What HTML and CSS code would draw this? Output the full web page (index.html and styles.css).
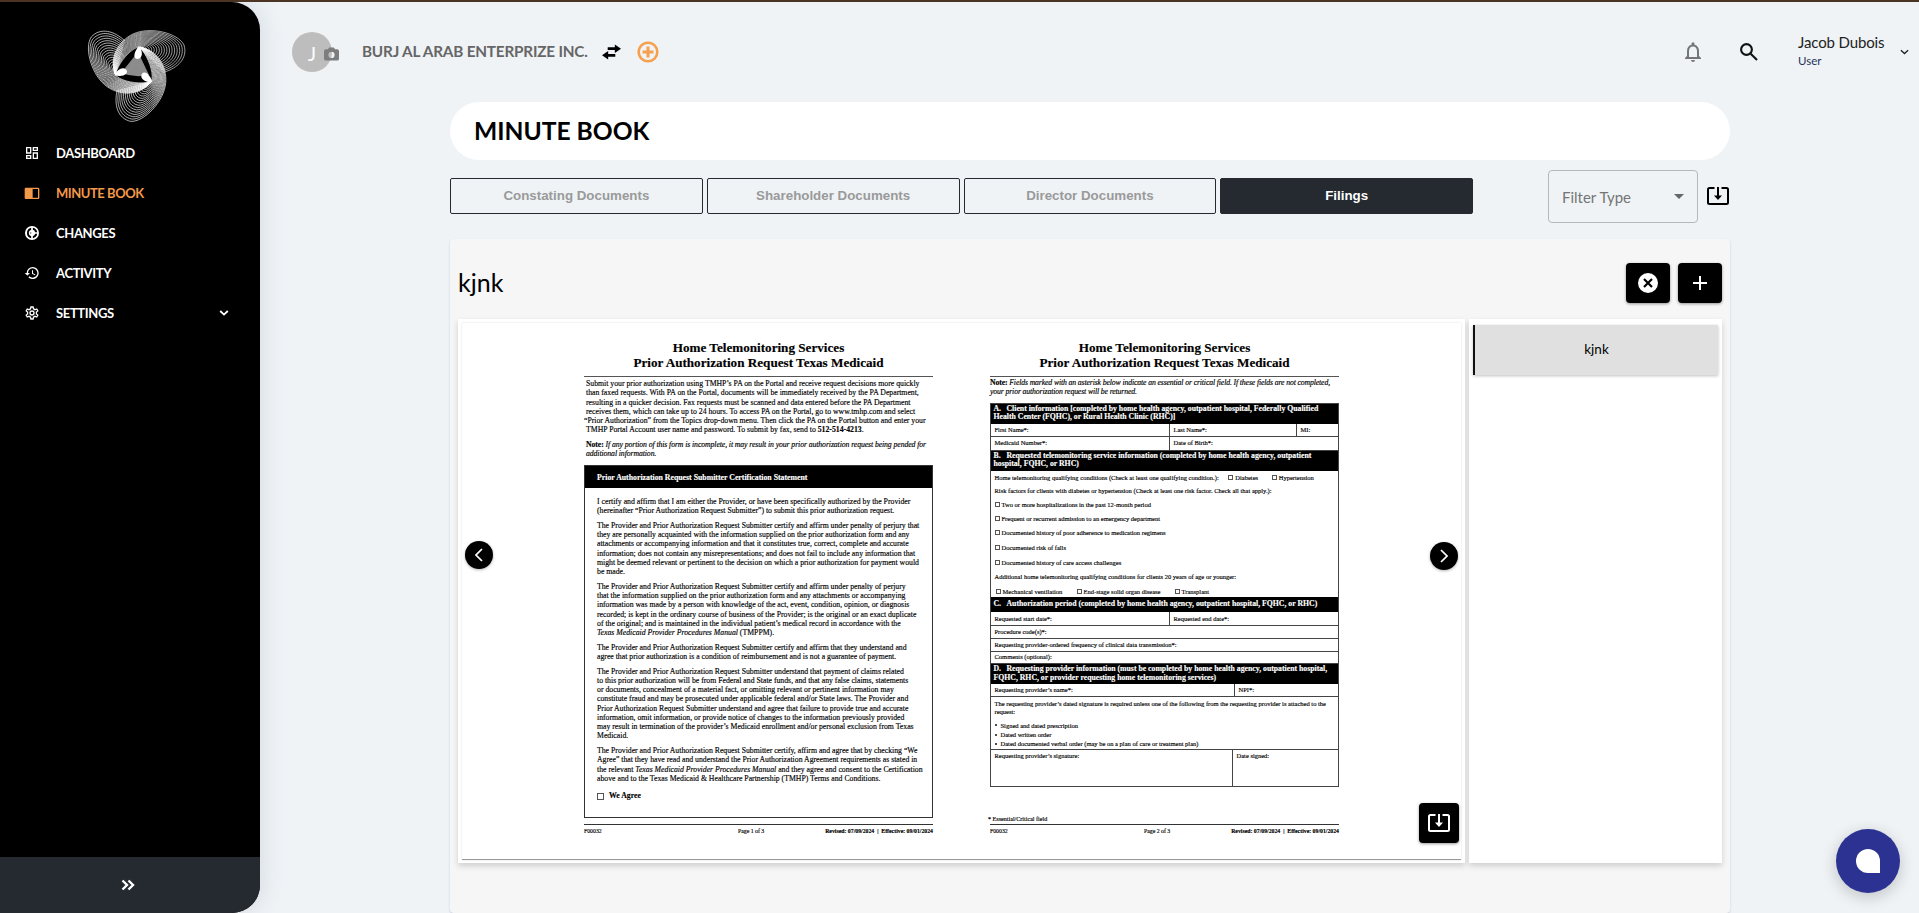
FILE: index.html
```html
<!DOCTYPE html>
<html lang="en">
<head>
<meta charset="utf-8">
<title>Minute Book</title>
<link rel="stylesheet" href="styles.css">
</head>
<body>
<div class="app">
  <aside class="sidebar">
    <svg class="logo" viewBox="86 28 100 96" id="logo" aria-label="Logo"></svg>
    <nav class="nav">
      <a class="nav-item"><svg class="nav-icon" viewBox="0 0 24 24"><path d="M19 5v2h-4V5h4M9 5v6H5V5h4m10 8v6h-4v-6h4M9 17v2H5v-2h4M21 3h-8v6h8V3zM11 3H3v10h8V3zm10 8h-8v10h8V11zm-10 4H3v6h8v-6z"/></svg><span>DASHBOARD</span></a>
      <a class="nav-item active"><svg class="nav-icon" viewBox="0 0 24 24"><path d="M21 4H3c-1.100 0-2 .9-2 2v13c0 1.100.9 2 2 2h18c1.100 0 2-.9 2-2V6c0-1.100-.9-2-2-2zM3 19V6h8v13H3zm18 0h-8V6h8v13z"/><path d="M3 5h9v15H3z"/></svg><span>MINUTE BOOK</span></a>
      <a class="nav-item"><svg class="nav-icon" viewBox="0 0 24 24"><path fill-rule="evenodd" d="M12 1.500a10.500 10.500 0 1 0 0 21 10.500 10.500 0 0 0 0-21zM13.300 4.200A8 8 0 0 1 19.800 10.700h-3A5 5 0 0 0 13.300 7.200zM10.700 4.200v3a5 5 0 0 0 0 9.600v3a8 8 0 0 1 0-15.600zM13.300 19.800v-3a5 5 0 0 0 3.500-3.500h3a8 8 0 0 1-6.500 6.500zM10.700 10v4a2.500 2.500 0 0 1 0-4z"/></svg><span>CHANGES</span></a>
      <a class="nav-item"><svg class="nav-icon" viewBox="0 0 24 24"><path d="M13 3a9 9 0 0 0-9 9H1l3.890 3.890.07.14L9 12H6a7 7 0 1 1 2.060 4.940l-1.420 1.420A9 9 0 1 0 13 3zm-1 5v5l4.280 2.540.72-1.210-3.500-2.080V8H12z"/></svg><span>ACTIVITY</span></a>
      <a class="nav-item"><svg class="nav-icon" viewBox="0 0 24 24"><path fill-rule="evenodd" d="M9.500 2h5l.5 3 1.600.9 2.900-1.100 2.500 4.300-2.400 1.900v2l2.400 1.900-2.500 4.300-2.900-1.100-1.600.9-.5 3h-5l-.5-3-1.600-.9-2.900 1.100L2 14.900 4.400 13v-2L2 9.100l2.500-4.300 2.900 1.100L9 5zM11.100 4l-.4 2.400L7.600 8.200 5.200 7.300l-.8 1.300 2 1.600v3.600l-2 1.600.8 1.300 2.400-.9 3.100 1.800.4 2.400h1.800l.4-2.400 3.100-1.800 2.400.9.800-1.300-2-1.600v-3.600l2-1.600-.8-1.300-2.400.9-3.100-1.800L12.900 4zM12 8a4 4 0 1 1 0 8 4 4 0 0 1 0-8zm0 2a2 2 0 1 0 0 4 2 2 0 0 0 0-4z"/></svg><span>SETTINGS</span><svg class="nav-caret" viewBox="0 0 10 6"><path d="M1.200 1l3.800 3.600L8.800 1"/></svg></a>
    </nav>
    <div class="sidebar-foot"><svg viewBox="0 0 14 12"><path d="M1.500 1.500L6 6l-4.500 4.500M7.500 1.500L12 6l-4.500 4.500"/></svg></div>
  </aside>

  <main class="main">
    <header class="topbar">
      <div class="avatar">J<svg class="camera" viewBox="0 0 16 14"><path fill-rule="evenodd" d="M5.500 0h5l1.300 2H14a2 2 0 0 1 2 2v8a2 2 0 0 1-2 2H2a2 2 0 0 1-2-2V4a2 2 0 0 1 2-2h2.200zM8 4.700a3.300 3.300 0 1 0 0 6.600 3.300 3.300 0 0 0 0-6.600z"/></svg></div>
      <div class="company">BURJ AL ARAB ENTERPRIZE INC.</div>
      <svg class="swap" viewBox="0 0 20 16"><path d="M13.500 0L20 4.500 13.500 9V6H6V3h7.500zM6.500 7L0 11.500 6.500 16v-3H14v-3H6.500z"/></svg>
      <svg class="add" viewBox="0 0 22 22"><circle cx="11" cy="11" r="9.300"/><path d="M11 5.500v11M5.500 11h11"/></svg>
      <div class="topbar-right">
        <svg class="bell" viewBox="0 0 16 20"><path d="M8 20a2 2 0 0 0 2-1.900H6A2 2 0 0 0 8 20zm6-6V9c0-3.100-1.600-5.600-4.500-6.300v-.9a1.500 1.500 0 0 0-3 0v.9C3.600 3.400 2 5.900 2 9v5l-2 2v1h16v-1zm-2 1H4V9c0-2.500 1.500-4.600 4-4.600s4 2.100 4 4.600z"/></svg>
        <svg class="search" viewBox="0 0 18 18"><circle cx="6.500" cy="6.500" r="5.400"/><path d="M10.700 10.700l6.300 6.300"/></svg>
        <div class="user"><span class="user-name">Jacob Dubois</span><span class="user-role">User</span></div>
        <svg class="user-caret" viewBox="0 0 10 6"><path d="M1 1l4 3.700L9 1"/></svg>
      </div>
    </header>

    <section class="content">
      <h1 class="title"><span>MINUTE BOOK</span></h1>
      <div class="toolbar">
        <div class="tabs">
          <button class="tab">Constating Documents</button>
          <button class="tab">Shareholder Documents</button>
          <button class="tab">Director Documents</button>
          <button class="tab selected">Filings</button>
        </div>
        <div class="filter"><span>Filter Type</span><i class="triangle"></i></div>
        <svg class="dl" viewBox="0 0 22 18"><path d="M7.500 1H2.500Q1 1 1 2.500v13Q1 17 2.500 17h17q1.500 0 1.500-1.500v-13Q21 1 19.500 1h-5"/><path d="M11 0v10"/><path class="head" d="M7 8.500h8l-4 4.500z"/></svg>
      </div>

      <div class="card">
        <div class="card-head">
          <h2>kjnk</h2>
          <button class="btn"><svg viewBox="0 0 20 20"><circle cx="10" cy="10" r="10" fill="#fff"/><path d="M6 6l8 8M14 6l-8 8" stroke="#000" stroke-width="2.200"/></svg></button>
          <button class="btn"><svg viewBox="0 0 20 20"><path d="M10 3v14M3 10h14" stroke="#fff" stroke-width="2"/></svg></button>
        </div>
        <div class="card-body">
          <div class="viewer">
            <div class="sheet">
              <article class="page">
                <h3>Home Telemonitoring Services<br>Prior Authorization Request Texas Medicaid</h3>
                <div class="intro">
                  <p>Submit your prior authorization using TMHP’s PA on the Portal and receive request decisions more quickly<br>than faxed requests. With PA on the Portal, documents will be immediately received by the PA Department,<br>resulting in a quicker decision. Fax requests must be scanned and data entered before the PA Department<br>receives them, which can take up to 24 hours. To access PA on the Portal, go to www.tmhp.com and select<br><span class="hang">“</span>Prior Authorization” from the Topics drop-down menu. Then click the PA on the Portal button and enter your<br>TMHP Portal Account user name and password. To submit by fax, send to <b>512-514-4213</b>.</p>
                  <p class="note"><b>Note:</b> <i>If any portion of this form is incomplete, it may result in your prior authorization request being pended for<br>additional information.</i></p>
                </div>
                <div class="statement">
                  <h4>Prior Authorization Request Submitter Certification Statement</h4>
                  <div class="clauses">
                    <p>I certify and affirm that I am either the Provider, or have been specifically authorized by the Provider<br>(hereinafter “Prior Authorization Request Submitter”) to submit this prior authorization request.</p>
                    <p>The Provider and Prior Authorization Request Submitter certify and affirm under penalty of perjury that<br>they are personally acquainted with the information supplied on the prior authorization form and any<br>attachments or accompanying information and that it constitutes true, correct, complete and accurate<br>information; does not contain any misrepresentations; and does not fail to include any information that<br>might be deemed relevant or pertinent to the decision on which a prior authorization for payment would<br>be made.</p>
                    <p>The Provider and Prior Authorization Request Submitter certify and affirm under penalty of perjury<br>that the information supplied on the prior authorization form and any attachments or accompanying<br>information was made by a person with knowledge of the act, event, condition, opinion, or diagnosis<br>recorded; is kept in the ordinary course of business of the Provider; is the original or an exact duplicate<br>of the original; and is maintained in the individual patient’s medical record in accordance with the<br><i>Texas Medicaid Provider Procedures Manual</i> (TMPPM).</p>
                    <p>The Provider and Prior Authorization Request Submitter certify and affirm that they understand and<br>agree that prior authorization is a condition of reimbursement and is not a guarantee of payment.</p>
                    <p>The Provider and Prior Authorization Request Submitter understand that payment of claims related<br>to this prior authorization will be from Federal and State funds, and that any false claims, statements<br>or documents, concealment of a material fact, or omitting relevant or pertinent information may<br>constitute fraud and may be prosecuted under applicable federal and/or State laws. The Provider and<br>Prior Authorization Request Submitter understand and agree that failure to provide true and accurate<br>information, omit information, or provide notice of changes to the information previously provided<br>may result in termination of the provider’s Medicaid enrollment and/or personal exclusion from Texas<br>Medicaid.</p>
                    <p>The Provider and Prior Authorization Request Submitter certify, affirm and agree that by checking “We<br>Agree” that they have read and understand the Prior Authorization Agreement requirements as stated in<br>the relevant <i>Texas Medicaid Provider Procedures Manual</i> and they agree and consent to the Certification<br>above and to the Texas Medicaid &amp; Healthcare Partnership (TMHP) Terms and Conditions.</p>
                    <p class="agree"><i class="box"></i><b>We Agree</b></p>
                  </div>
                </div>
                <footer><span>F00032</span><span>Page 1 of 3</span><b>Revised: 07/09/2024 &nbsp;|&nbsp; Effective: 09/01/2024</b></footer>
              </article>

              <article class="page">
                <h3>Home Telemonitoring Services<br>Prior Authorization Request Texas Medicaid</h3>
                <p class="lead"><b>Note:</b> <i>Fields marked with an asterisk below indicate an essential or critical field. If these fields are not completed,<br>your prior authorization request will be returned.</i></p>
                <div class="form">
                  <h5 class="two"><span>A.</span>Client information [completed by home health agency, outpatient hospital, Federally Qualified<br>Health Center (FQHC), or Rural Health Clinic (RHC)]</h5>
                  <div class="row h14"><div class="c-half">First Name*:</div><div class="c-last">Last Name*:</div><div>MI:</div></div>
                  <div class="row h14"><div class="c-half">Medicaid Number*:</div><div>Date of Birth*:</div></div>
                  <h5 class="two"><span>B.</span>Requested telemonitoring service information (completed by home health agency, outpatient<br>hospital, FQHC, or RHC)</h5>
                  <div class="conditions">
                    <p class="first">Home telemonitoring qualifying conditions (Check at least one qualifying condition.): <i class="box diab"></i>Diabetes <i class="box hyper"></i>Hypertension</p>
                    <p class="second">Risk factors for clients with diabetes or hypertension (Check at least one risk factor. Check all that apply.):</p>
                    <p class="opt"><i class="box"></i>Two or more hospitalizations in the past 12-month period</p>
                    <p class="opt"><i class="box"></i>Frequent or recurrent admission to an emergency department</p>
                    <p class="opt"><i class="box"></i>Documented history of poor adherence to medication regimens</p>
                    <p class="opt"><i class="box"></i>Documented risk of falls</p>
                    <p class="opt"><i class="box"></i>Documented history of care access challenges</p>
                    <p class="second">Additional home telemonitoring qualifying conditions for clients 20 years of age or younger:</p>
                    <p class="opt trio"><span><i class="box"></i>Mechanical ventilation</span><span><i class="box"></i>End-stage solid organ disease</span><span><i class="box"></i>Transplant</span></p>
                  </div>
                  <h5 class="one"><span>C.</span>Authorization period (completed by home health agency, outpatient hospital, FQHC, or RHC)</h5>
                  <div class="row h14"><div class="c-half">Requested start date*:</div><div>Requested end date*:</div></div>
                  <div class="row h13"><div>Procedure code(s)*:</div></div>
                  <div class="row h13"><div>Requesting provider-ordered frequency of clinical data transmission*:</div></div>
                  <div class="row h12"><div>Comments (optional):</div></div>
                  <h5 class="two"><span>D.</span>Requesting provider information (must be completed by home health agency, outpatient hospital,<br>FQHC, RHC, or provider requesting home telemonitoring services)</h5>
                  <div class="row h13"><div class="c-npi">Requesting provider’s name*:</div><div>NPI*:</div></div>
                  <div class="require">
                    <p>The requesting provider’s dated signature is required unless one of the following from the requesting provider is attached to the<br>request:</p>
                    <ul><li>Signed and dated prescription</li><li>Dated written order</li><li>Dated documented verbal order (may be on a plan of care or treatment plan)</li></ul>
                  </div>
                  <div class="row sign"><div class="c-sign">Requesting provider’s signature:</div><div>Date signed:</div></div>
                </div>
                <p class="footnote">* Essential/Critical field</p>
                <footer><span>F00032</span><span>Page 2 of 3</span><b>Revised: 07/09/2024 &nbsp;|&nbsp; Effective: 09/01/2024</b></footer>
              </article>
            </div>
            <button class="arrow prev"><svg viewBox="0 0 8 14"><path d="M7 1L1 7l6 6"/></svg></button>
            <button class="arrow next"><svg viewBox="0 0 8 14"><path d="M1 1l6 6-6 6"/></svg></button>
            <button class="save"><svg class="dl" viewBox="0 0 22 18"><path d="M7.500 1H2.500Q1 1 1 2.500v13Q1 17 2.500 17h17q1.500 0 1.500-1.500v-13Q21 1 19.500 1h-5"/><path d="M11 0v10"/><path class="head" d="M7 8.500h8l-4 4.500z"/></svg></button>
          </div>
          <div class="list"><div class="list-item">kjnk</div></div>
        </div>
      </div>
    </section>
  </main>
</div>
<button class="chat"><i></i></button>
<script src="logo.js"></script>
</body>
</html>
```
FILE: styles.css
```css
* { box-sizing: border-box; }
body {
  margin: 0;
  height: 913px;
  overflow: hidden;
  border-top: 2px solid #4c3424;
  background: #eff3f6;
  font-family: Lato, "Open Sans", sans-serif;
  color: #000;
}
h1, h2, h3, h4, h5, p, ul { margin: 0; padding: 0; font-weight: normal; }
button { border: 0; padding: 0; font-family: inherit; }
svg { display: block; flex: none; }

.app { display: flex; height: 911px; }

/* Sidebar */
.sidebar {
  width: 260px;
  flex: none;
  display: flex;
  flex-direction: column;
  background: #000;
  border-radius: 0 28px 28px 0;
  overflow: hidden;
  box-shadow: 2px 0 22px rgba(80, 100, 120, .16);
}
.logo { width: 100px; height: 96px; margin: 26px 0 0 86px; }
.logo .strand { fill: none; stroke: #fff; stroke-width: .75; opacity: .8; }
.logo .core { fill: #fff; opacity: .55; }
.logo .spot { fill: #fff; }
.nav { margin-top: 9px; flex: 1; }
.nav-item {
  height: 40px;
  padding: 0 31px 0 24px;
  display: flex;
  align-items: center;
  color: #fff;
  font-size: 13px;
  font-weight: 700;
  letter-spacing: -.35px;
}
.nav-item span { margin-left: 16px; flex: 1; }
.nav-icon { width: 16px; height: 16px; fill: currentColor; }
.nav-item.active { color: #f3994a; letter-spacing: -.45px; }
.nav-caret { width: 10px; height: 6px; fill: none; stroke: #fff; stroke-width: 1.8; }
.sidebar-foot { height: 56px; background: #242a30; display: flex; align-items: center; padding-left: 121px; }
.sidebar-foot svg { width: 14px; height: 12px; fill: none; stroke: #fff; stroke-width: 2.4; }

/* Top bar */
.main { flex: 1; display: flex; flex-direction: column; }
.topbar { height: 100px; padding: 0 10px 0 32px; display: flex; align-items: center; }
.avatar {
  width: 40px; height: 40px;
  border-radius: 50%;
  background: #bdbdbd;
  color: #fafafa;
  font-size: 20px;
  line-height: 42px;
  text-align: center;
  position: relative;
}
.camera { position: absolute; left: 32px; top: 15px; width: 15px; height: 14px; fill: #7d7d7d; }
.company { margin-left: 30px; padding-bottom: 2px; width: 225px; font-size: 15.300px; font-weight: 700; color: #666; white-space: nowrap; letter-spacing: -.2px; }
.swap { width: 19px; height: 16px; margin-left: 15px; }
.add { width: 22px; height: 22px; margin-left: 16px; fill: none; stroke: #f6a04d; stroke-width: 2.6; }
.add path { stroke-width: 3; }
.topbar-right { margin-left: auto; display: flex; align-items: center; }
.bell { width: 16px; height: 20px; fill: #757575; margin-right: 39px; }
.search { width: 18px; height: 18px; fill: none; stroke: #111; stroke-width: 2.1; margin-right: 40px; }
.user { width: 102px; display: flex; flex-direction: column; padding-bottom: 3px; }
.user-name { font-size: 15px; line-height: 20px; color: #222; letter-spacing: -.12px; }
.user-role { font-size: 11.500px; line-height: 17px; color: #1c3557; }
.user-caret { width: 9px; height: 6px; fill: none; stroke: #222; stroke-width: 1.5; }

/* Content */
.content { width: 1280px; margin-left: 190px; flex: 1; display: flex; flex-direction: column; }
.title {
  height: 58px; padding-left: 24px;
  border-radius: 29px;
  background: #fff;
  font-size: 24.600px; line-height: 58px; font-weight: 700;
}
.toolbar { height: 79px; padding-top: 10px; display: flex; align-items: flex-start; }
.tabs { width: 1023px; margin-top: 8px; display: grid; grid-template-columns: repeat(4, 1fr); gap: 4px; }
.tab {
  height: 36px;
  padding-bottom: 2px;
  border: 1px solid #242a30;
  border-radius: 2px;
  background: transparent;
  color: #9a9a9a;
  font: bold 13.330px "Liberation Sans", sans-serif;
}
.tab.selected { background: #242a30; color: #fff; }
.filter {
  width: 150px; height: 53px; margin-left: 75px; padding: 0 13px;
  border: 1px solid #b4b8bb; border-radius: 4px;
  display: flex; align-items: center; justify-content: space-between;
  font-size: 15px; color: #757575;
}
.triangle { border: 5px solid transparent; border-top-color: #666; border-bottom: 0; }
.dl { width: 22px; height: 18px; fill: none; stroke: #000; stroke-width: 2; }
.dl .head { fill: #000; stroke: none; }
.toolbar .dl { margin: 17px 0 0 9px; }

.card {
  flex: 1;
  background: #f6f6f6;
  border-radius: 4px;
  box-shadow: 0 1px 2px rgba(90, 110, 140, .3);
  padding: 0 8px;
}
.card-head { height: 80px; display: flex; align-items: center; gap: 8px; padding-top: 8px; }
.card-head h2 { flex: 1; font-size: 25px; line-height: 32px; padding-bottom: 3px; }
.btn { width: 44px; height: 40px; border-radius: 4px; background: #000; box-shadow: 0 1px 3px rgba(0,0,0,.4); display: grid; place-items: center; }
.btn svg { width: 20px; height: 20px; fill: none; }
.card-body { height: 544px; display: flex; gap: 4px; }
.viewer, .list { background: #fff; box-shadow: 0 3px 6px rgba(0, 0, 0, .16); }
.viewer { width: 1007px; padding: 4px 4px 3px; position: relative; }
.sheet {
  height: 537px; padding: 16px 122px 0 122px;
  display: flex; justify-content: space-between;
  border-bottom: 1px solid #999;
  box-shadow: 0 0 2px rgba(0, 0, 0, .13);
}
.arrow {
  position: absolute;
  width: 28px; height: 28px; border-radius: 50%;
  background: #000; display: grid; place-items: center;
  box-shadow: 0 1px 3px rgba(0, 0, 0, .3);
}
.arrow svg { width: 8px; height: 14px; fill: none; stroke: #fff; stroke-width: 1.7; }
.prev { left: 7px; top: 222px; }
.next { right: 7px; top: 223px; }
.save { position: absolute; right: 6px; top: 484px; width: 40px; height: 40px; border-radius: 4px; background: #000; display: grid; place-items: center; box-shadow: 0 1px 3px rgba(0,0,0,.4); }
.save .dl { stroke: #fff; }
.save .dl .head { fill: #fff; }
.list { flex: 1; padding: 6px 4px; }
.list-item {
  height: 50px;
  border-left: 2px solid #111;
  background: #e0e0e0;
  box-shadow: 0 1px 3px rgba(0, 0, 0, .25);
  font-size: 13.500px; line-height: 49px; text-align: center;
}

/* Document pages */
.page {
  width: 349px;
  height: 502px;
  display: flex;
  flex-direction: column;
  position: relative;
  font: 7.750px/9.280px "Liberation Serif", serif;
  color: #000;
  -webkit-text-stroke: .15px;
  white-space: nowrap;
}
.page h3 { height: 37.500px; padding-top: 2px; border-bottom: 1px solid #555; font-size: 13.150px; line-height: 14.600px; font-weight: bold; text-align: center; }
.intro { height: 88.500px; padding: 2.500px 0 0 2px; }
.intro p, .clauses p { margin-bottom: 5.250px; }
.hang { margin-left: -2px; }
.note { letter-spacing: -.09px; }
.statement { height: 353px; border: 1px solid #333; }
.statement h4 { height: 22px; background: #000; color: #fff; padding-left: 12px; font-size: 7.800px; line-height: 23px; font-weight: bold; }
.clauses { padding: 9px 0 0 12px; }
.agree { display: flex; align-items: center; gap: 5px; padding-top: 3px; }
.box { display: inline-block; width: 5px; height: 5px; border: 1px solid #555; margin-right: 2px; }
.agree .box { width: 7px; height: 7px; margin: 0; }
.page footer {
  position: absolute; left: 0; right: 0; bottom: 0; height: 17px;
  border-top: 1px solid #333; padding-top: 2px;
  display: grid; grid-template-columns: 154px 1fr auto;
  font-size: 5.800px;
}
.lead { height: 26px; padding-top: 1.500px; letter-spacing: -.13px; }

.form { height: 384px; border: 1px solid #444; font-size: 6.500px; line-height: 8.700px; }
.form h5 { background: #000; color: #fff; font-size: 7.750px; font-weight: bold; padding-left: 2.500px; }
.form h5 span { display: inline-block; width: 13px; }
.form h5.two { height: 20px; padding-top: 1px; }
.form h5.one { height: 14.700px; line-height: 14.500px; }
.row { display: flex; border-bottom: 1px solid #444; }
.row > div { padding: .8px 0 0 3.500px; display: flex; align-items: center; border-right: 1px solid #444; }
.row > div:last-child { flex: 1; border-right: 0; }
.h14 { height: 13.600px; }
.h13 { height: 12.900px; }
.h12 { height: 12.300px; }
.row .c-half { width: 179px; }
.row .c-last { width: 127px; }
.row .c-npi { width: 244px; }
.row .c-sign { width: 242px; }
.conditions { height: 126.800px; padding: 3px 0 0 3.500px; }
.conditions .first { height: 13.200px; }
.conditions .second { height: 13.500px; }
.conditions .opt { height: 14.550px; }
.diab { margin-left: 8px; }
.hyper { margin-left: 12px; }
.conditions .second + .opt { padding-top: 1px; }
.trio { display: flex; padding-left: 1px; }
.trio span:nth-child(1) { width: 81px; }
.trio span:nth-child(2) { width: 98px; }
.require { height: 53px; padding: 3px 0 0 3.500px; border-bottom: 1px solid #444; line-height: 8.300px; }
.require ul { margin-top: 4.500px; list-style: none; line-height: 9.200px; }
.require li { display: flex; gap: 4px; align-items: center; }
.require li::before { content: ""; width: 2px; height: 2px; border-radius: 1px; background: #111; }
.row.sign { border-bottom: 0; }
.row.sign > div { height: 37px; align-items: flex-start; padding-top: 2.500px; }
.footnote { position: absolute; left: -2px; bottom: 17px; font-size: 6.100px; line-height: 9px; }

.chat {
  position: absolute; left: 1836px; top: 829px;
  width: 64px; height: 64px; border-radius: 50%;
  background: #2b3291;
  box-shadow: 0 4px 16px rgba(0, 0, 0, .2);
  display: grid; place-items: center;
}
.chat i { width: 24px; height: 24px; background: #fff; border-radius: 12px 12px 0 12px; }
```
FILE: logo.js
```js
// Draws the logo: one lobe of interpolated strands, repeated at 0, 120 and 240 degrees.
(function () {
  var ns = "http://www.w3.org/2000/svg";
  var outer = [163.7,72.3, 178,68, 188,58, 184,45, 178,33, 150,26, 133,34, 118,41, 109,58, 115,74];
  var inner = [143,51, 145,50, 145,48.5, 143,47.5, 141,46.5, 137,47, 134,49, 126,54, 118,65, 115.5,74];
  var svg = document.getElementById("logo");
  var strands = 17;

  function add(cls, d, angle) {
    var path = document.createElementNS(ns, "path");
    path.setAttribute("class", cls);
    path.setAttribute("d", d);
    path.setAttribute("transform", "rotate(" + angle + " 135.3 67.8)");
    svg.appendChild(path);
  }

  for (var lobe = 0; lobe < 3; lobe++) {
    for (var s = 0; s < strands; s++) {
      var t = s / (strands - 1);
      var p = outer.map(function (v, i) { return (v + (inner[i] - v) * t).toFixed(2); });
      add("strand", "M" + p.slice(0, 2) + "C" + p.slice(2).join(" "), lobe * 120);
    }
    add("spot", "M139 46C143 51 143 58 138 59C133 59 133 53 139 46Z", lobe * 120);
  }
  add("core", "M138 52L149 75Q135 78 121 73Z", 0);
})();
```
